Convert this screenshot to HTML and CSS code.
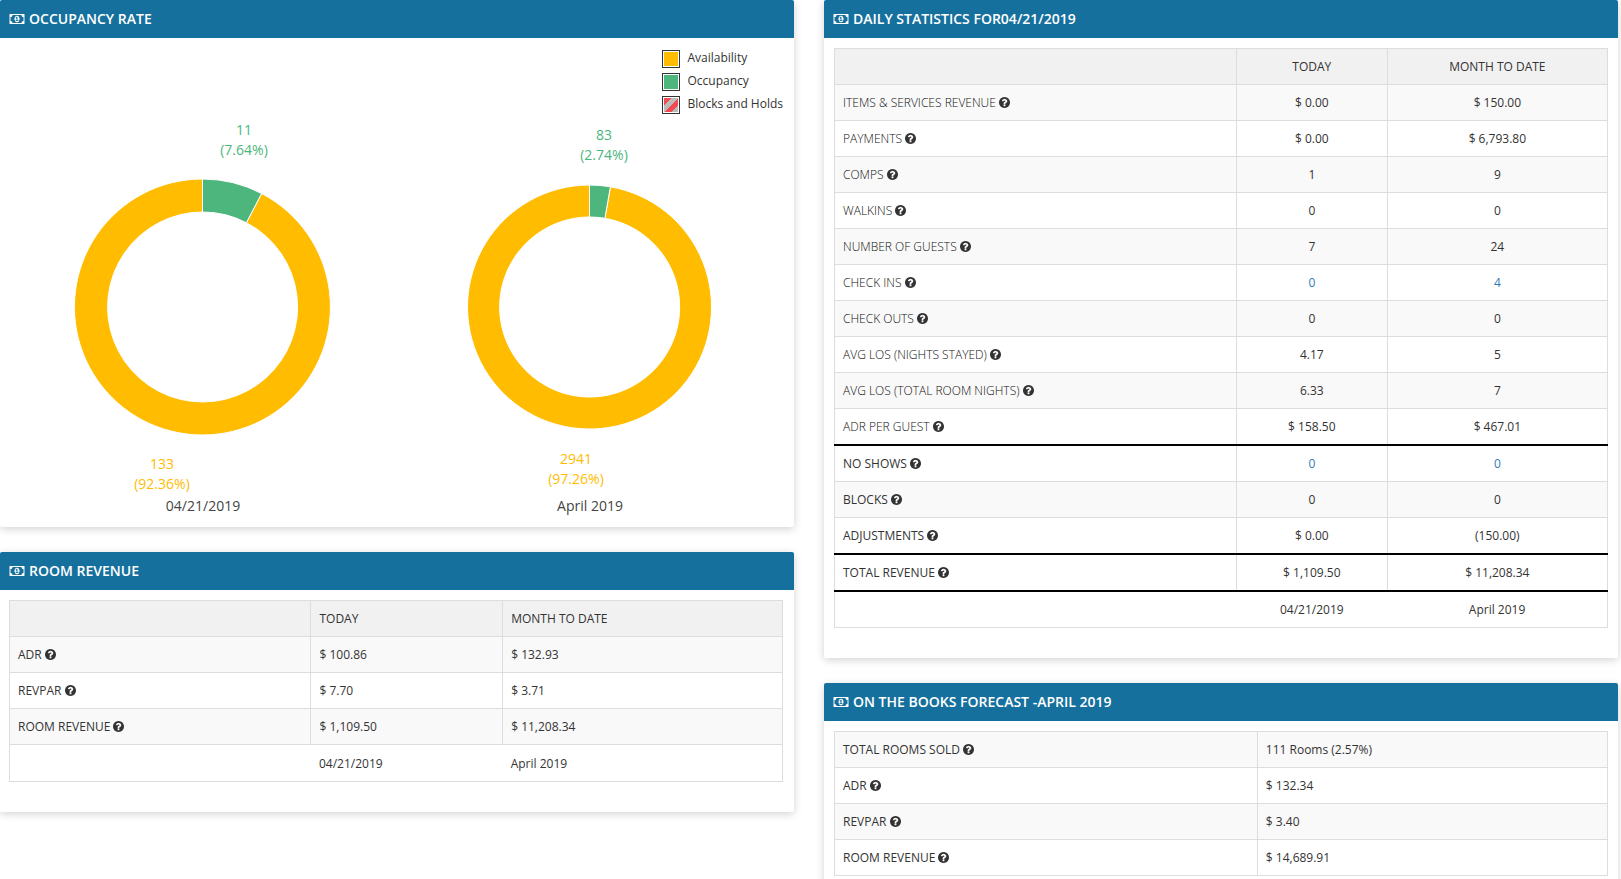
FILE: index.html
```html
<!DOCTYPE html>
<html lang="en">
<head>
<meta charset="utf-8">
<title>Dashboard</title>
<link rel="stylesheet" href="styles.css">
</head>
<body>
<svg class="defs" aria-hidden="true">
  <symbol id="money" viewBox="0 256 1920 1280"><path d="M768 1152h384v-96h-128v-448h-114l-148 137 77 80q42-37 55-57h2v288h-128v96zm512-256q0 70-21 142t-59.5 134-101.5 101-138 39-138-39-101.5-101-59.5-134-21-142 21-142 59.5-134 101.5-101 138-39 138 39 101.5 101 59.5 134 21 142zm512 256v-512q-106 0-181-75t-75-181h-1152q0 106-75 181t-181 75v512q106 0 181 75t75 181h1152q0-106 75-181t181-75zm128-832v1152q0 26-19 45t-45 19h-1792q-26 0-45-19t-19-45v-1152q0-26 19-45t45-19h1792q26 0 45 19t19 45z"/></symbol>
  <symbol id="help" viewBox="0 0 1536 1536"><path d="M896 1248v-192q0-14-9-23t-23-9h-192q-14 0-23 9t-9 23v192q0 14 9 23t23 9h192q14 0 23-9t9-23zm256-672q0-88-55.5-163t-138.5-116-170-41q-243 0-371 213-15 24 8 42l132 100q7 6 19 6 16 0 25-12 53-68 86-92 34-24 86-24 48 0 85.5 26t37.5 59q0 38-20 61t-68 45q-63 28-115.5 86.5t-52.5 125.5v36q0 14 9 23t23 9h192q14 0 23-9t9-23q0-19 21.5-49.5t54.5-49.5q32-18 49-28.5t46-35 44.5-48 28-60.5 12.5-81zm384 192q0 209-103 385.5t-279.5 279.5-385.5 103-385.5-103-279.5-279.5-103-385.5 103-385.5 279.5-279.5 385.5-103 385.5 103 279.5 279.5 103 385.5z"/></symbol>
</svg>
<main class="dashboard">
  <div class="column">
    <section class="panel">
      <h2 class="panel-title"><svg class="money"><use href="#money"/></svg>OCCUPANCY RATE</h2>
      <div class="panel-body occupancy">
        <ul class="legend">
          <li><span class="swatch"><span class="fill available"></span></span>Availability</li>
          <li><span class="swatch"><span class="fill occupied"></span></span>Occupancy</li>
          <li><span class="swatch"><span class="fill blocked"></span></span>Blocks and Holds</li>
        </ul>
        <div class="charts">
          <svg class="chart" viewBox="0 0 387 402" role="img" aria-label="Occupancy 04/21/2019">
            <g transform="translate(193.5 192)">
              <path class="slice available" d="M59.1-113.5A128 128 0 1 1 0-128V-95A95 95 0 1 0 43.9-84.3Z"/>
              <path class="slice occupied" d="M0-128A128 128 0 0 1 59.1-113.5L43.9-84.3A95 95 0 0 0 0-95Z"/>
            </g>
            <text class="occupied" x="235" y="20">11</text>
            <text class="occupied" x="235" y="40">(7.64%)</text>
            <text class="available" x="153" y="354">133</text>
            <text class="available" x="153" y="374">(92.36%)</text>
            <text x="194" y="396">04/21/2019</text>
          </svg>
          <svg class="chart" viewBox="0 0 387 402" role="img" aria-label="Occupancy April 2019">
            <g transform="translate(193.5 192)">
              <path class="slice available" d="M20.9-120.2A122 122 0 1 1 0-122V-90A90 90 0 1 0 15.4-88.7Z"/>
              <path class="slice occupied" d="M0-122A122 122 0 0 1 20.9-120.2L15.4-88.7A90 90 0 0 0 0-90Z"/>
            </g>
            <text class="occupied" x="208" y="25">83</text>
            <text class="occupied" x="208" y="45">(2.74%)</text>
            <text class="available" x="180" y="349">2941</text>
            <text class="available" x="180" y="369">(97.26%)</text>
            <text x="194" y="396">April 2019</text>
          </svg>
        </div>
      </div>
    </section>

    <section class="panel">
      <h2 class="panel-title"><svg class="money"><use href="#money"/></svg>ROOM REVENUE</h2>
      <div class="panel-body">
        <table class="stats revenue">
          <thead><tr><th class="name"></th><th class="today">TODAY</th><th>MONTH TO DATE</th></tr></thead>
          <tbody class="odd">
            <tr><th>ADR <svg class="help"><use href="#help"/></svg></th><td>$ 100.86</td><td>$ 132.93</td></tr>
            <tr><th>REVPAR <svg class="help"><use href="#help"/></svg></th><td>$ 7.70</td><td>$ 3.71</td></tr>
            <tr><th>ROOM REVENUE <svg class="help"><use href="#help"/></svg></th><td>$ 1,109.50</td><td>$ 11,208.34</td></tr>
          </tbody>
          <tfoot><tr><td></td><td>04/21/2019</td><td>April 2019</td></tr></tfoot>
        </table>
      </div>
    </section>
  </div>

  <div class="column right">
    <section class="panel">
      <h2 class="panel-title"><svg class="money"><use href="#money"/></svg>DAILY STATISTICS FOR04/21/2019</h2>
      <div class="panel-body">
        <table class="stats daily">
          <thead><tr><th class="name"></th><th class="today">TODAY</th><th>MONTH TO DATE</th></tr></thead>
          <tbody class="odd light">
            <tr><th>ITEMS &amp; SERVICES REVENUE <svg class="help"><use href="#help"/></svg></th><td>$ 0.00</td><td>$ 150.00</td></tr>
            <tr><th>PAYMENTS <svg class="help"><use href="#help"/></svg></th><td>$ 0.00</td><td>$ 6,793.80</td></tr>
            <tr><th>COMPS <svg class="help"><use href="#help"/></svg></th><td>1</td><td>9</td></tr>
            <tr><th>WALKINS <svg class="help"><use href="#help"/></svg></th><td>0</td><td>0</td></tr>
            <tr><th>NUMBER OF GUESTS <svg class="help"><use href="#help"/></svg></th><td>7</td><td>24</td></tr>
            <tr><th>CHECK INS <svg class="help"><use href="#help"/></svg></th><td><a href="#">0</a></td><td><a href="#">4</a></td></tr>
            <tr><th>CHECK OUTS <svg class="help"><use href="#help"/></svg></th><td>0</td><td>0</td></tr>
            <tr><th>AVG LOS (NIGHTS STAYED) <svg class="help"><use href="#help"/></svg></th><td>4.17</td><td>5</td></tr>
            <tr><th>AVG LOS (TOTAL ROOM NIGHTS) <svg class="help"><use href="#help"/></svg></th><td>6.33</td><td>7</td></tr>
            <tr><th>ADR PER GUEST <svg class="help"><use href="#help"/></svg></th><td>$ 158.50</td><td>$ 467.01</td></tr>
          </tbody>
          <tbody class="even ruled">
            <tr><th>NO SHOWS <svg class="help"><use href="#help"/></svg></th><td><a href="#">0</a></td><td><a href="#">0</a></td></tr>
            <tr><th>BLOCKS <svg class="help"><use href="#help"/></svg></th><td>0</td><td>0</td></tr>
            <tr><th>ADJUSTMENTS <svg class="help"><use href="#help"/></svg></th><td>$ 0.00</td><td>(150.00)</td></tr>
          </tbody>
          <tbody class="ruled">
            <tr><th>TOTAL REVENUE <svg class="help"><use href="#help"/></svg></th><td>$ 1,109.50</td><td>$ 11,208.34</td></tr>
          </tbody>
          <tfoot class="ruled"><tr><td></td><td>04/21/2019</td><td>April 2019</td></tr></tfoot>
        </table>
      </div>
    </section>

    <section class="panel">
      <h2 class="panel-title"><svg class="money"><use href="#money"/></svg>ON THE BOOKS FORECAST -APRIL 2019</h2>
      <div class="panel-body">
        <table class="stats forecast">
          <tbody class="odd">
            <tr><th class="name">TOTAL ROOMS SOLD <svg class="help"><use href="#help"/></svg></th><td>111 Rooms (2.57%)</td></tr>
            <tr><th>ADR <svg class="help"><use href="#help"/></svg></th><td>$ 132.34</td></tr>
            <tr><th>REVPAR <svg class="help"><use href="#help"/></svg></th><td>$ 3.40</td></tr>
            <tr><th>ROOM REVENUE <svg class="help"><use href="#help"/></svg></th><td>$ 14,689.91</td></tr>
          </tbody>
        </table>
      </div>
    </section>
  </div>
</main>
</body>
</html>
```
FILE: styles.css
```css
* { box-sizing: border-box; }
html, body { height: 100%; overflow: hidden; }
body {
  margin: 0;
  background: #fff;
  color: #333;
  font-family: "Open Sans", "Noto Sans", sans-serif;
  font-size: 12px;
  line-height: 19px;
}
.defs { display: none; }

.dashboard {
  display: grid;
  grid-template-columns: 1fr 1fr;
  align-items: start;
  gap: 30px;
  padding-right: 3px;
}
.column { display: flex; flex-direction: column; gap: 25px; min-width: 0; }

.panel {
  background: #fff;
  border-radius: 2px;
  box-shadow: 0 2px 8px rgba(0, 0, 0, 0.18);
}
.panel-title {
  display: flex;
  align-items: center;
  gap: 4px;
  height: 38px;
  margin: 0;
  padding: 0 9px 1px;
  border-radius: 2px 2px 0 0;
  background: #16709e;
  color: #fff;
  font-size: 14px;
  font-weight: 600;
}
.money { width: 16px; height: 10px; fill: currentColor; }
.panel-body { padding: 10px 11px 30px 9px; }
.right .panel-body { padding: 10px 10px 30px; }
.panel-body.occupancy { padding-bottom: 10px; }

.legend {
  display: flex;
  flex-direction: column;
  gap: 5px;
  width: max-content;
  margin: 0 0 0 auto;
  padding: 2px 0 1px;
  list-style: none;
}
.legend li { display: flex; gap: 7px; height: 18px; line-height: 16px; }
.swatch {
  width: 18px;
  height: 18px;
  padding: 1px;
  border: 1px solid #333;
}
.fill { display: block; height: 14px; }
.fill.available { background: #ffbc00; }
.fill.occupied { background: #4db67d; }
.fill.blocked {
  background: linear-gradient(135deg, #f64a52 25%, #bbb 25% 50%, #f64a52 50% 75%, #bbb 75%);
}

.charts { display: grid; grid-template-columns: 1fr 1fr; }
.chart { display: block; width: 100%; height: 402px; }
.chart text { fill: #444; font-size: 14px; text-anchor: middle; }
.chart .slice { stroke: #fff; stroke-width: 1px; }
.chart .available { fill: #ffbc00; }
.chart .occupied { fill: #4db67d; }

.stats {
  width: 100%;
  table-layout: fixed;
  border-collapse: collapse;
  border: 1px solid #ddd;
}
.stats th, .stats td {
  height: 36px;
  padding: 8px;
  border: 1px solid #ddd;
  text-align: left;
  font-weight: 400;
}
.stats th { font-weight: 500; }
.stats .light th { color: #111; font-weight: 300; }
.stats thead th { background: #f1f1f1; font-weight: 500; }
.stats .odd tr:nth-child(odd), .stats .even tr:nth-child(even) { background: #f9f9f9; }
.stats tfoot td { height: 37px; border-width: 1px 0; }
.stats .ruled tr:first-child > * { border-top: 2px solid #000; }
.revenue .name { width: 39%; }
.revenue .today { width: 24.8%; }
.daily .name { width: 52%; }
.daily .today { width: 19.5%; }
.daily td, .daily thead th { text-align: center; }
.daily tfoot td { height: 36px; }
.forecast .name { width: 54.7%; }
.help { width: 11px; height: 11px; fill: #333; vertical-align: -1px; }
a { color: #337ab7; text-decoration: none; }
```
